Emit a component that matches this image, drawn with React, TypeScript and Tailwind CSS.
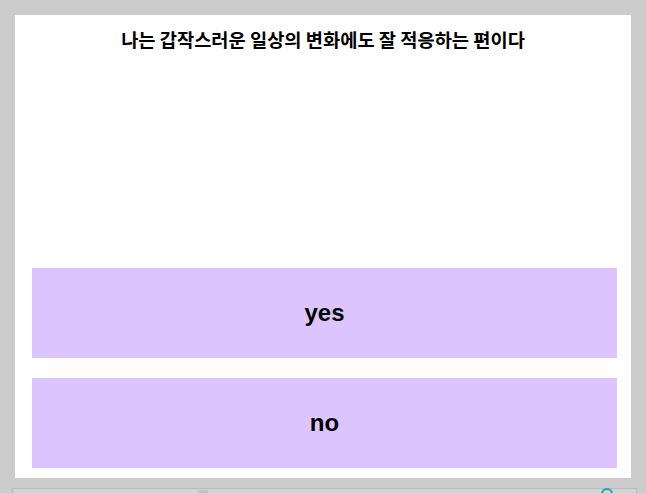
export default function App() {
  const options = ["yes", "no"]

  return (
    <div className="relative w-[646px] h-[493px] overflow-hidden bg-[#cccccc] pt-[15px] pl-[15px]">
      <div className="w-[616px] h-[463px] bg-white flex flex-col">
        <h1
          className="h-[52px] pt-[12px] text-center text-[18.7px] leading-[24px] font-bold text-black"
          style={{ fontFamily: '"Noto Sans CJK KR", "Noto Sans", sans-serif' }}
        >
          나는 갑작스러운 일상의 변화에도 잘 적응하는 편이다
        </h1>
        <div className="flex-1" />
        <div className="flex flex-col gap-[20px] pl-[17px] pb-[10px]">
          {options.map((opt) => (
            <button
              key={opt}
              className="w-[585px] h-[90px] bg-[#dcc5fe] flex items-center justify-center text-[24px] font-bold text-black"
              style={{ fontFamily: '"Liberation Sans", Arial, sans-serif' }}
            >
              {opt}
            </button>
          ))}
        </div>
      </div>

      {/* bottom bar peeking in */}
      <div className="absolute left-[12px] top-[488px] w-[625px] h-[10px] border-t border-l border-r border-[#b9b9b9] bg-[#d4d4d4]">
        <div className="absolute left-[185px] top-[1px] w-[10px] h-[3px] bg-[#c4c4c4]" />
        <div className="absolute left-[588px] top-[-1px] w-[12px] h-[12px] rounded-full border-2 border-[#2a9bb0]" />
      </div>
    </div>
  )
}
